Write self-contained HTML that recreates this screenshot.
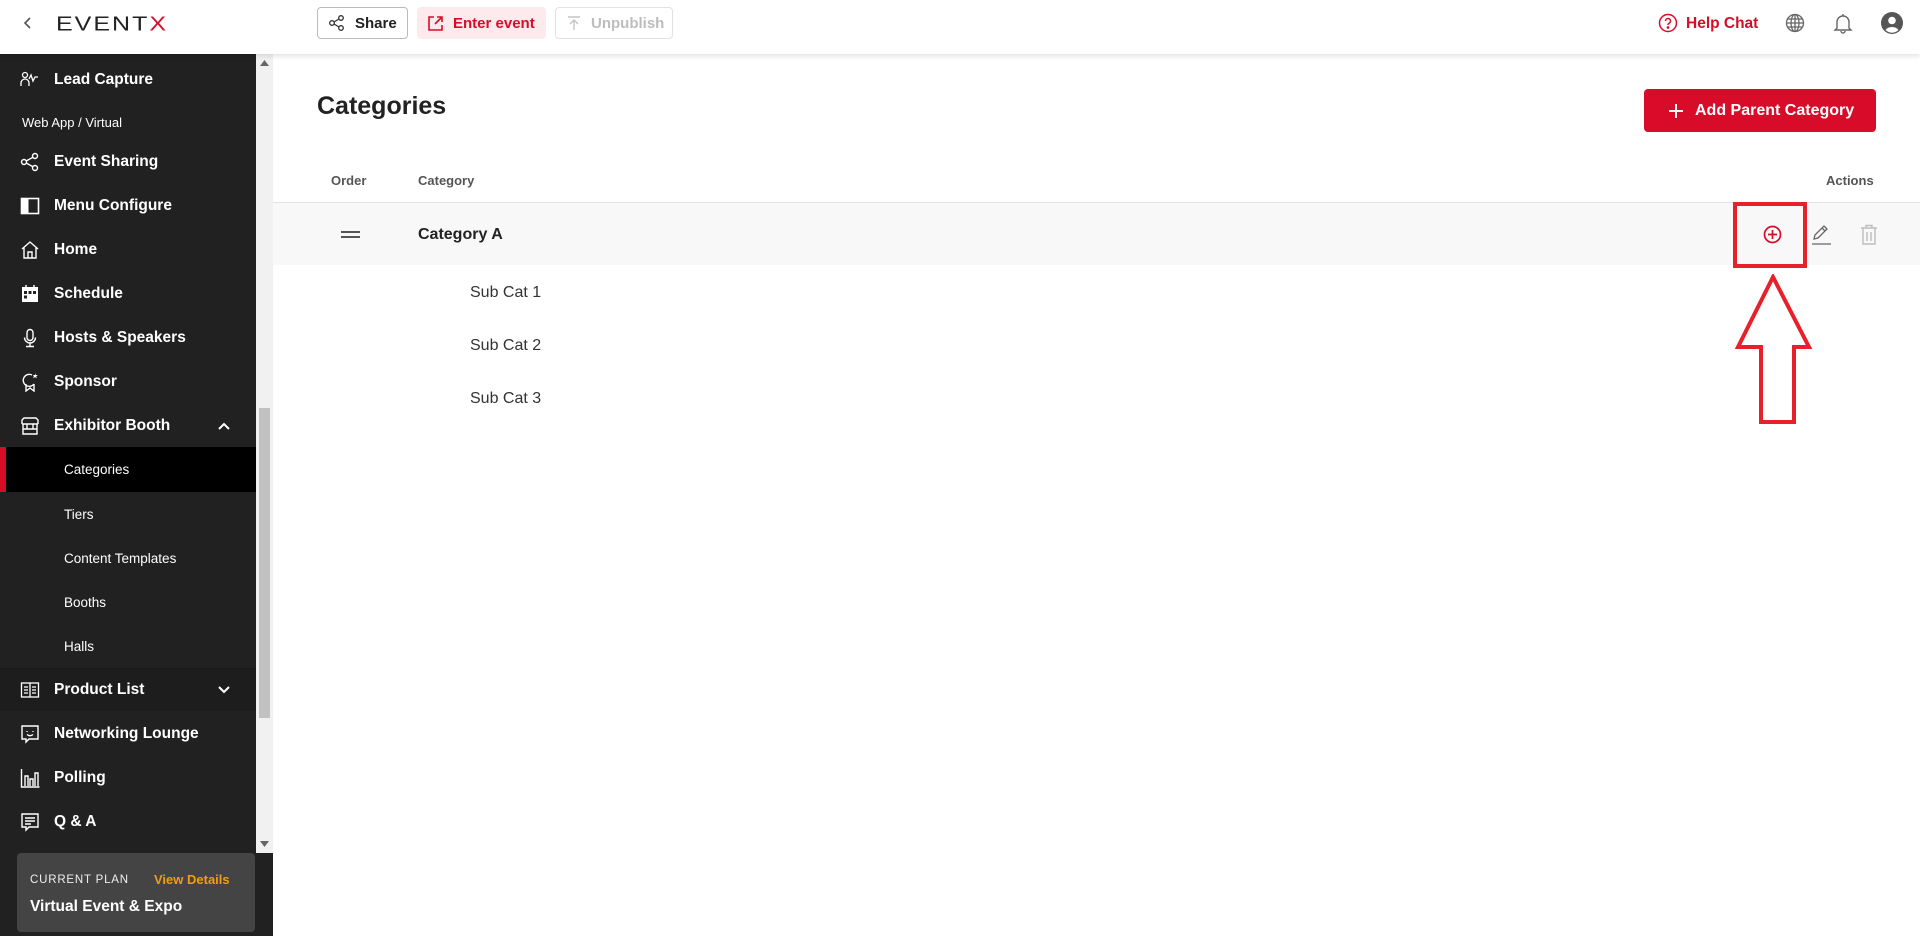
<!DOCTYPE html>
<html><head><meta charset="utf-8"><style>
*{box-sizing:border-box;margin:0;padding:0}
body{width:1920px;height:936px;overflow:hidden;background:#fff;font-family:"Liberation Sans",sans-serif;position:relative;color:#222}
.hdr{position:absolute;left:0;top:0;width:1920px;height:54px;background:#fff;box-shadow:0 2px 5px rgba(0,0,0,.12);z-index:5}
.abs{position:absolute}
.btn{position:absolute;top:7px;height:32px;border-radius:4px;font-size:15px;font-weight:bold;display:flex;align-items:center;padding-left:10px}
.side{position:absolute;left:0;top:54px;width:256px;height:882px;background:#212121;color:#fff}
.it{position:absolute;left:0;width:256px;height:44px;display:flex;align-items:center;font-size:15.5px;font-weight:bold}
.it svg{position:absolute;left:20px;width:20px;height:20px}
.it span{position:absolute;left:54px}
.sub{position:absolute;left:0;width:256px;height:44px;display:flex;align-items:center;font-size:13.5px;padding-left:64px}
</style></head><body>
<div class="hdr">
  <svg class="abs" style="left:23px;top:16px" width="10" height="14" viewBox="0 0 10 14"><path d="M7 2L2 7l5 5" stroke="#555" stroke-width="1.6" fill="none"/></svg>
  <div class="abs" style="left:56px;font-size:25px;letter-spacing:2px;transform:scaleY(.8);transform-origin:left top;color:#222;font-weight:normal;top:13px">EVENT<span style="color:#d80c28">X</span></div>
  <div class="btn" style="left:317px;width:91px;border:1px solid #bbb;color:#222">
    <svg width="18" height="18" viewBox="0 0 18 18" fill="none" stroke="#333" stroke-width="1.3"><circle cx="4" cy="9" r="2.3"/><circle cx="13" cy="4" r="2.3"/><circle cx="13" cy="14" r="2.3"/><path d="M6 8l5-3M6 10l5 3"/></svg><span style="margin-left:9px">Share</span></div>
  <div class="btn" style="left:417px;width:129px;background:#fdeaec;color:#d80c28">
    <svg width="17" height="17" viewBox="0 0 17 17" fill="none" stroke="#d80c28" stroke-width="1.6"><path d="M7 2H2v13h13v-5M10 2h5v5M15 2L8 9"/></svg><span style="margin-left:9px">Enter event</span></div>
  <div class="btn" style="left:555px;width:118px;border:1px solid #e2e2e2;color:#bdbdbd">
    <svg width="16" height="16" viewBox="0 0 16 16" fill="none" stroke="#c4c4c4" stroke-width="1.4"><path d="M2 2h12M8 15V6M4 9l4-4 4 4"/></svg><span style="margin-left:9px">Unpublish</span></div>
  <svg class="abs" style="left:1658px;top:13px" width="20" height="20" viewBox="0 0 20 20" fill="none" stroke="#d80c28" stroke-width="1.5"><circle cx="10" cy="10" r="8.5"/><path d="M7.5 8a2.5 2.5 0 1 1 3.5 2.3c-.7.4-1 .8-1 1.7"/><circle cx="10" cy="14.5" r=".6" fill="#d80c28"/></svg>
  <div class="abs" style="left:1686px;top:15px;font-size:15.5px;font-weight:bold;color:#d80c28">Help Chat</div>
  <svg class="abs" style="left:1785px;top:13px" width="20" height="20" viewBox="0 0 20 20" fill="none" stroke="#666" stroke-width="1.3"><circle cx="10" cy="10" r="8.5"/><ellipse cx="10" cy="10" rx="4" ry="8.5"/><path d="M1.5 10h17M10 1.5v17M3 6h14M3 14h14"/></svg>
  <svg class="abs" style="left:1833px;top:12px" width="20" height="22" viewBox="0 0 20 22" fill="none" stroke="#666" stroke-width="1.4"><path d="M4 16V10a6 6 0 0 1 12 0v6l2 2H2z"/><path d="M8 19a2 2 0 0 0 4 0M10 2v2"/></svg>
  <svg class="abs" style="left:1881px;top:12px" width="22" height="22" viewBox="0 0 22 22"><circle cx="11" cy="11" r="11" fill="#555"/><circle cx="11" cy="8.5" r="3.8" fill="#fff"/><path d="M4.5 18a7.5 6 0 0 1 13 0a9 9 0 0 1-13 0z" fill="#fff"/></svg>
</div>

<div class="side">
  <div class="it" style="top:4px"><svg viewBox="0 0 20 20" fill="none" stroke="#fff" stroke-width="1.3"><circle cx="5" cy="5" r="2.5"/><path d="M1 16v-3a4 4 0 0 1 8 0v3M9 9l2-4 2 6 2-4h3"/></svg><span>Lead Capture</span></div>
  <div class="sub" style="top:46px;padding-left:22px;font-size:13px">Web App / Virtual</div>
  <div class="it" style="top:86px"><svg viewBox="0 0 20 20" fill="none" stroke="#fff" stroke-width="1.4"><circle cx="4" cy="10" r="2.5"/><circle cx="15" cy="4" r="2.5"/><circle cx="15" cy="16" r="2.5"/><path d="M6.2 9l6.5-3.6M6.2 11l6.5 3.6"/></svg><span>Event Sharing</span></div>
  <div class="it" style="top:130px"><svg viewBox="0 0 20 20"><rect x="1.5" y="2.5" width="17" height="15" fill="none" stroke="#fff" stroke-width="1.6"/><rect x="1.5" y="2.5" width="7" height="15" fill="#fff"/></svg><span>Menu Configure</span></div>
  <div class="it" style="top:174px"><svg viewBox="0 0 20 20" fill="none" stroke="#fff" stroke-width="1.4"><path d="M2 9l8-7 8 7M4 7.5V18h12V7.5M8 18v-6h4v6"/></svg><span>Home</span></div>
  <div class="it" style="top:218px"><svg viewBox="0 0 20 20"><rect x="2" y="3" width="16" height="15" fill="#fff"/><rect x="4" y="7" width="3" height="3" fill="#212121"/><rect x="8.5" y="7" width="3" height="3" fill="#212121"/><rect x="13" y="7" width="3" height="3" fill="#212121"/><rect x="4" y="11.5" width="3" height="3" fill="#212121"/><path d="M6 1v3M14 1v3" stroke="#fff" stroke-width="1.5"/></svg><span>Schedule</span></div>
  <div class="it" style="top:262px"><svg viewBox="0 0 20 20" fill="none" stroke="#fff" stroke-width="1.4"><rect x="7" y="1.5" width="6" height="11" rx="3"/><path d="M4.5 9.5a5.5 5.5 0 0 0 11 0M10 15v3M6 18.5h8"/></svg><span>Hosts &amp; Speakers</span></div>
  <div class="it" style="top:306px"><svg viewBox="0 0 20 20" fill="none" stroke="#fff" stroke-width="1.4"><path d="M12 3a6 6 0 1 0 2 9M6 12v7l4-3 4 3v-7"/><path d="M15 1l.8 2h2l-1.6 1.3.6 2-1.8-1.2-1.8 1.2.6-2L13 3h2z" fill="#fff" stroke="none"/></svg><span>Sponsor</span></div>
  <div class="it" style="top:350px"><svg viewBox="0 0 20 20" fill="none" stroke="#fff" stroke-width="1.4"><path d="M2 8V4l2-2h12l2 2v4M2 8h16M3 8v10h14V8M3 13h14M7 8v5M13 8v5"/></svg><span>Exhibitor Booth</span>
    <svg style="left:217px;width:14px;height:14px" viewBox="0 0 14 14" fill="none" stroke="#fff" stroke-width="2"><path d="M2 10l5-5 5 5"/></svg></div>
  <div class="sub" style="top:393px;background:#000;height:45px"><div style="position:absolute;left:0;top:0;width:6px;height:45px;background:#d80c28"></div>Categories</div>
  <div class="sub" style="top:438px">Tiers</div>
  <div class="sub" style="top:482px">Content Templates</div>
  <div class="sub" style="top:526px">Booths</div>
  <div class="sub" style="top:570px">Halls</div>
  <div class="it" style="top:614px;background:#1d1d1d;height:43px;border-top:1px solid #1a1a1a"><svg viewBox="0 0 20 20" fill="none" stroke="#fff" stroke-width="1.3"><rect x="1.5" y="3" width="17" height="14"/><path d="M10 3v14M4 7h4M4 10h4M4 13h4M12 7h4M12 10h4M12 13h4"/></svg><span>Product List</span>
    <svg style="left:217px;width:14px;height:14px" viewBox="0 0 14 14" fill="none" stroke="#fff" stroke-width="2"><path d="M2 4l5 5 5-5"/></svg></div>
  <div class="it" style="top:658px"><svg viewBox="0 0 20 20" fill="none" stroke="#fff" stroke-width="1.4"><path d="M2 2h16v13H9l-3 3v-3H2z"/><path d="M7 7v1M13 7v1M7 10.5q3 2.5 6 0"/></svg><span>Networking Lounge</span></div>
  <div class="it" style="top:702px"><svg viewBox="0 0 20 20" fill="none" stroke="#fff" stroke-width="1.4"><path d="M1.5 1v18h18M5 18V8h3v10M10 18V11h3v7M15 18V5h3v13"/></svg><span>Polling</span></div>
  <div class="it" style="top:746px"><svg viewBox="0 0 20 20" fill="none" stroke="#fff" stroke-width="1.4"><path d="M2 2h16v13H9l-3 3v-3H2z"/><path d="M5 6h10M5 9h10M5 12h6"/></svg><span>Q &amp; A</span></div>
  <div class="abs" style="left:17px;top:799px;width:238px;height:79px;background:#444;border-radius:4px">
    <div class="abs" style="left:13px;top:21px;font-size:11.5px;letter-spacing:.8px;color:#eee">CURRENT PLAN</div>
    <div class="abs" style="left:137px;top:19px;font-size:13px;font-weight:bold;color:#f39c12">View Details</div>
    <div class="abs" style="left:13px;top:45px;font-size:15.5px;font-weight:bold;color:#fff">Virtual Event &amp; Expo</div>
  </div>
</div>
<div class="abs" style="left:256px;top:54px;width:17px;height:799px;background:#f1f1f1">
  <svg class="abs" style="left:4px;top:6px" width="9" height="6"><path d="M0 6L4.5 0 9 6z" fill="#666"/></svg>
  <div class="abs" style="left:3px;top:354px;width:11px;height:310px;background:#c1c1c1"></div>
  <svg class="abs" style="left:4px;top:787px" width="9" height="6"><path d="M0 0L4.5 6 9 0z" fill="#666"/></svg>
</div>
<div class="abs" style="left:256px;top:853px;width:17px;height:83px;background:#212121"></div>

<div class="abs" style="left:317px;top:92px;font-size:25px;font-weight:bold;color:#222">Categories</div>
<div class="abs" style="left:1644px;top:89px;width:232px;height:43px;background:#d80c28;border-radius:4px;color:#fff;font-size:16px;font-weight:bold;display:flex;align-items:center">
  <svg style="margin-left:24px" width="16" height="16" viewBox="0 0 16 16" stroke="#fff" stroke-width="2"><path d="M8 1v14M1 8h14"/></svg><span style="margin-left:11px">Add Parent Category</span></div>
<div class="abs" style="left:331px;top:173px;font-size:13px;font-weight:bold;color:#555">Order</div>
<div class="abs" style="left:418px;top:173px;font-size:13px;font-weight:bold;color:#555">Category</div>
<div class="abs" style="left:1826px;top:173px;font-size:13px;font-weight:bold;color:#555">Actions</div>
<div class="abs" style="left:273px;top:202px;width:1647px;height:1px;background:#e2e2e2"></div>
<div class="abs" style="left:273px;top:203px;width:1647px;height:62px;background:#f8f8f8"></div>
<div class="abs" style="left:341px;top:231px;width:19px;height:2px;background:#555"></div>
<div class="abs" style="left:341px;top:236px;width:19px;height:2px;background:#555"></div>
<div class="abs" style="left:418px;top:226px;font-size:16px;font-weight:bold;color:#222">Category A</div>
<svg class="abs" style="left:1763px;top:225px" width="19" height="19" viewBox="0 0 19 19" fill="none" stroke="#d80c28" stroke-width="1.7"><circle cx="9.5" cy="9.5" r="8"/><path d="M9.5 5v9M5 9.5h9"/></svg>
<svg class="abs" style="left:1811px;top:224px" width="21" height="21" viewBox="0 0 21 21" fill="none" stroke="#666" stroke-width="1.3"><path d="M3 15l1-4 9-9 3 3-9 9z M11 4l3 3"/><path d="M1 20h19"/></svg>
<svg class="abs" style="left:1860px;top:224px" width="18" height="21" viewBox="0 0 18 21" fill="none" stroke="#bdbdbd" stroke-width="1.4"><path d="M1 4h16M6 4V1.5h6V4M3 4v16h12V4M7 8v9M11 8v9"/></svg>
<div class="abs" style="left:1733px;top:202px;width:74px;height:66px;border:4px solid #e8202a"></div>
<svg class="abs" style="left:1735px;top:274px" width="78" height="152" viewBox="0 0 78 152"><path d="M38 3L3 73h23v75h33V73h15z" fill="none" stroke="#e8202a" stroke-width="4" stroke-linejoin="miter"/></svg>
<div class="abs" style="left:470px;top:284px;font-size:16px;color:#333">Sub Cat 1</div>
<div class="abs" style="left:470px;top:337px;font-size:16px;color:#333">Sub Cat 2</div>
<div class="abs" style="left:470px;top:390px;font-size:16px;color:#333">Sub Cat 3</div>
</body></html>
